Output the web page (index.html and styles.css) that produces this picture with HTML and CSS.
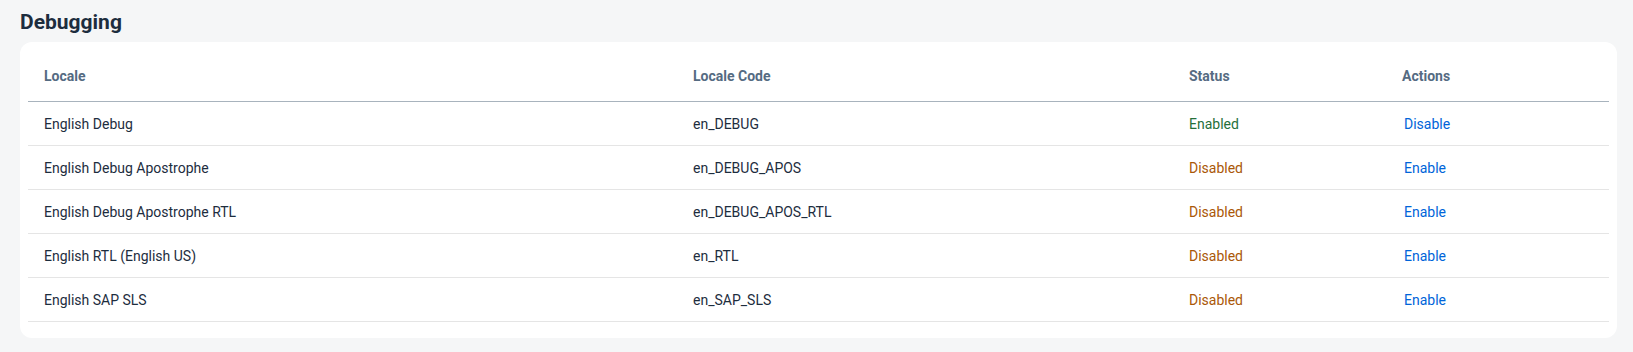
FILE: index.html
```html
<!DOCTYPE html>
<html lang="en">
<head>
<meta charset="utf-8">
<title>Debugging</title>
<link rel="stylesheet" href="styles.css">
</head>
<body>
<main class="page">
  <h2 class="title">Debugging</h2>
  <section class="card">
    <table class="grid">
      <colgroup>
        <col class="c1"><col class="c2"><col class="c3"><col class="c4">
      </colgroup>
      <thead>
        <tr><th>Locale</th><th>Locale Code</th><th>Status</th><th>Actions</th></tr>
      </thead>
      <tbody>
        <tr><td>English Debug</td><td>en_DEBUG</td><td class="ok">Enabled</td><td><a class="link" href="#">Disable</a></td></tr>
        <tr><td>English Debug Apostrophe</td><td>en_DEBUG_APOS</td><td class="off">Disabled</td><td><a class="link" href="#">Enable</a></td></tr>
        <tr><td>English Debug Apostrophe RTL</td><td>en_DEBUG_APOS_RTL</td><td class="off">Disabled</td><td><a class="link" href="#">Enable</a></td></tr>
        <tr><td>English RTL (English US)</td><td>en_RTL</td><td class="off">Disabled</td><td><a class="link" href="#">Enable</a></td></tr>
        <tr><td>English SAP SLS</td><td>en_SAP_SLS</td><td class="off">Disabled</td><td><a class="link" href="#">Enable</a></td></tr>
      </tbody>
    </table>
  </section>
</main>
</body>
</html>
```
FILE: styles.css
```css
html, body {
  margin: 0;
  padding: 0;
  background: #f5f6f7;
}
body {
  font-family: Roboto, "Liberation Sans", sans-serif;
  color: #1d2d3e;
}
.page {
  padding: 9px 16px 14px 20px;
}
.title {
  margin: 0 0 7px 0;
  font-size: 21px;
  line-height: 26px;
  font-weight: 700;
  color: #1d2d3e;
}
.card {
  background: #ffffff;
  border-radius: 12px;
  padding: 8px 8px 16px 8px;
}
.grid {
  width: 100%;
  border-collapse: collapse;
  table-layout: fixed;
  font-size: 14px;
}
.c1 { width: 649px; }
.c2 { width: 496px; }
.c3 { width: 213px; }
.c4 { width: auto; }
.grid th {
  text-align: left;
  font-weight: 700;
  color: #556b82;
  height: 51px;
  padding: 0 16px;
  border-bottom: 1px solid #a8b3bd;
}
.grid td {
  height: 43px;
  padding: 0 16px;
  border-bottom: 1px solid #e5e5e5;
}
.ok { color: #256f3a; }
.off { color: #aa5808; }
.link {
  color: #0064d9;
  text-decoration: none;
  padding-left: 2px;
}
```
